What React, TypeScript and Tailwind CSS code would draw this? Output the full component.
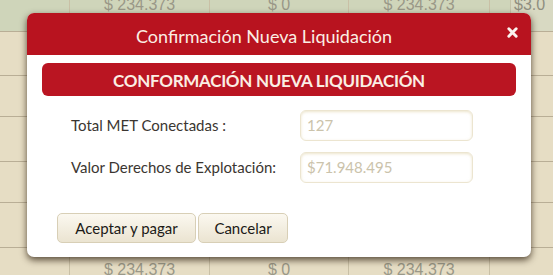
import type { ReactNode } from "react";

const amounts = ["$ 234.373", "$ 0", "$ 234.373"];
const rowHeights = [44, 41, 45, 41, 45];

function AmountRow({ top }: { top?: boolean }) {
  return (
    <div
      className={
        top
          ? "grid h-[31px] grid-cols-[70px_140px_139px_141px_21px_1fr] overflow-hidden bg-[#cfd5ba]"
          : "grid h-[30px] grid-cols-[70px_140px_139px_141px_21px_1fr] overflow-hidden bg-[#e6ddc4]"
      }
    >
      <div className="border-r border-[#c9c0a6]" />
      {amounts.map((value, i) => (
        <div
          key={i}
          className={`flex justify-center border-r border-[#c9c0a6] text-[16px] leading-[16px] text-[#9a9888] ${top ? "-mt-[3px]" : "pt-[14px]"}`}
        >
          {value}
        </div>
      ))}
      <div className={top ? "border-r border-[#c4c2a8]" : ""} />
      <div
        className={`pl-[3px] text-[16px] leading-[16px] text-[#8f8e80] ${top ? "-mt-[3px] bg-[#d8d9c2]" : ""}`}
      >
        {top ? "$3.0" : ""}
      </div>
    </div>
  );
}

function Field({ label, value }: { label: string; value: string }) {
  return (
    <div className="flex items-center">
      <span className="w-[229px] text-[15px] text-[#3b3631]">{label}</span>
      <div className="flex h-[31px] w-[173px] items-center rounded-[6px] border border-[#ece5d0] bg-white pl-[6px] text-[15px] text-[#cbc3ab] shadow-[inset_0_1px_3px_rgba(220,205,160,0.55)]">
        {value}
      </div>
    </div>
  );
}

function CreamButton({ children, className }: { children: ReactNode; className?: string }) {
  return (
    <button
      type="button"
      className={`h-[30px] rounded-[5px] border border-[#d8cfb6] bg-gradient-to-b from-[#fbf8f0] to-[#ebe4d1] text-[15px] text-[#1c1a17] ${className ?? ""}`}
    >
      {children}
    </button>
  );
}

export default function App() {
  return (
    <div className="relative h-[275px] w-[553px] overflow-hidden bg-[#e6ddc4] font-['Liberation_Sans',sans-serif]">
      <AmountRow top />
      {rowHeights.map((h, i) => (
        <div
          key={i}
          style={{ height: h }}
          className="border-t border-[#b9ae96] bg-[#e6ddc4] bg-[linear-gradient(90deg,transparent_69px,#d3c9ae_69px,#d3c9ae_70px,transparent_70px)]"
        />
      ))}
      <div className="border-t border-[#b9ae96]">
        <AmountRow />
      </div>

      {/* modal */}
      <div className="absolute left-[27px] top-[13px] w-[504px] overflow-hidden rounded-[7px] bg-white font-['Lato',sans-serif] shadow-[0_3px_7px_rgba(40,25,10,0.75)]">
        <div className="relative flex h-[42px] items-center justify-center bg-[#b8131f] pr-[30px] pt-[5px] text-[18px] text-[#fbeee4]">
          Confirmación Nueva Liquidación
          <svg
            viewBox="0 0 12 12"
            className="absolute right-[13px] top-[14px] h-[11px] w-[11px]"
          >
            <path
              d="M2 2 L10 10 M10 2 L2 10"
              stroke="#fbf3ee"
              strokeWidth="3.2"
              strokeLinecap="round"
            />
          </svg>
        </div>

        <div className="px-[15px] pt-[8px]">
          <div className="flex h-[33px] items-center justify-center rounded-[6px] bg-[#ba1522] pr-[20px] pt-[2px] text-[17px] font-bold tracking-[-0.3px] text-[#fbeee4]">
            CONFORMACIÓN NUEVA LIQUIDACIÓN
          </div>
        </div>

        <div className="flex flex-col gap-[11px] pl-[44px] pt-[14px]">
          <Field label="Total MET Conectadas :" value="127" />
          <Field label="Valor Derechos de Explotación:" value="$71.948.495" />
        </div>

        <div className="flex gap-[2px] pb-[14px] pl-[30px] pt-[30px]">
          <CreamButton className="w-[139px]">Aceptar y pagar</CreamButton>
          <CreamButton className="w-[90px]">Cancelar</CreamButton>
        </div>
      </div>
    </div>
  );
}
